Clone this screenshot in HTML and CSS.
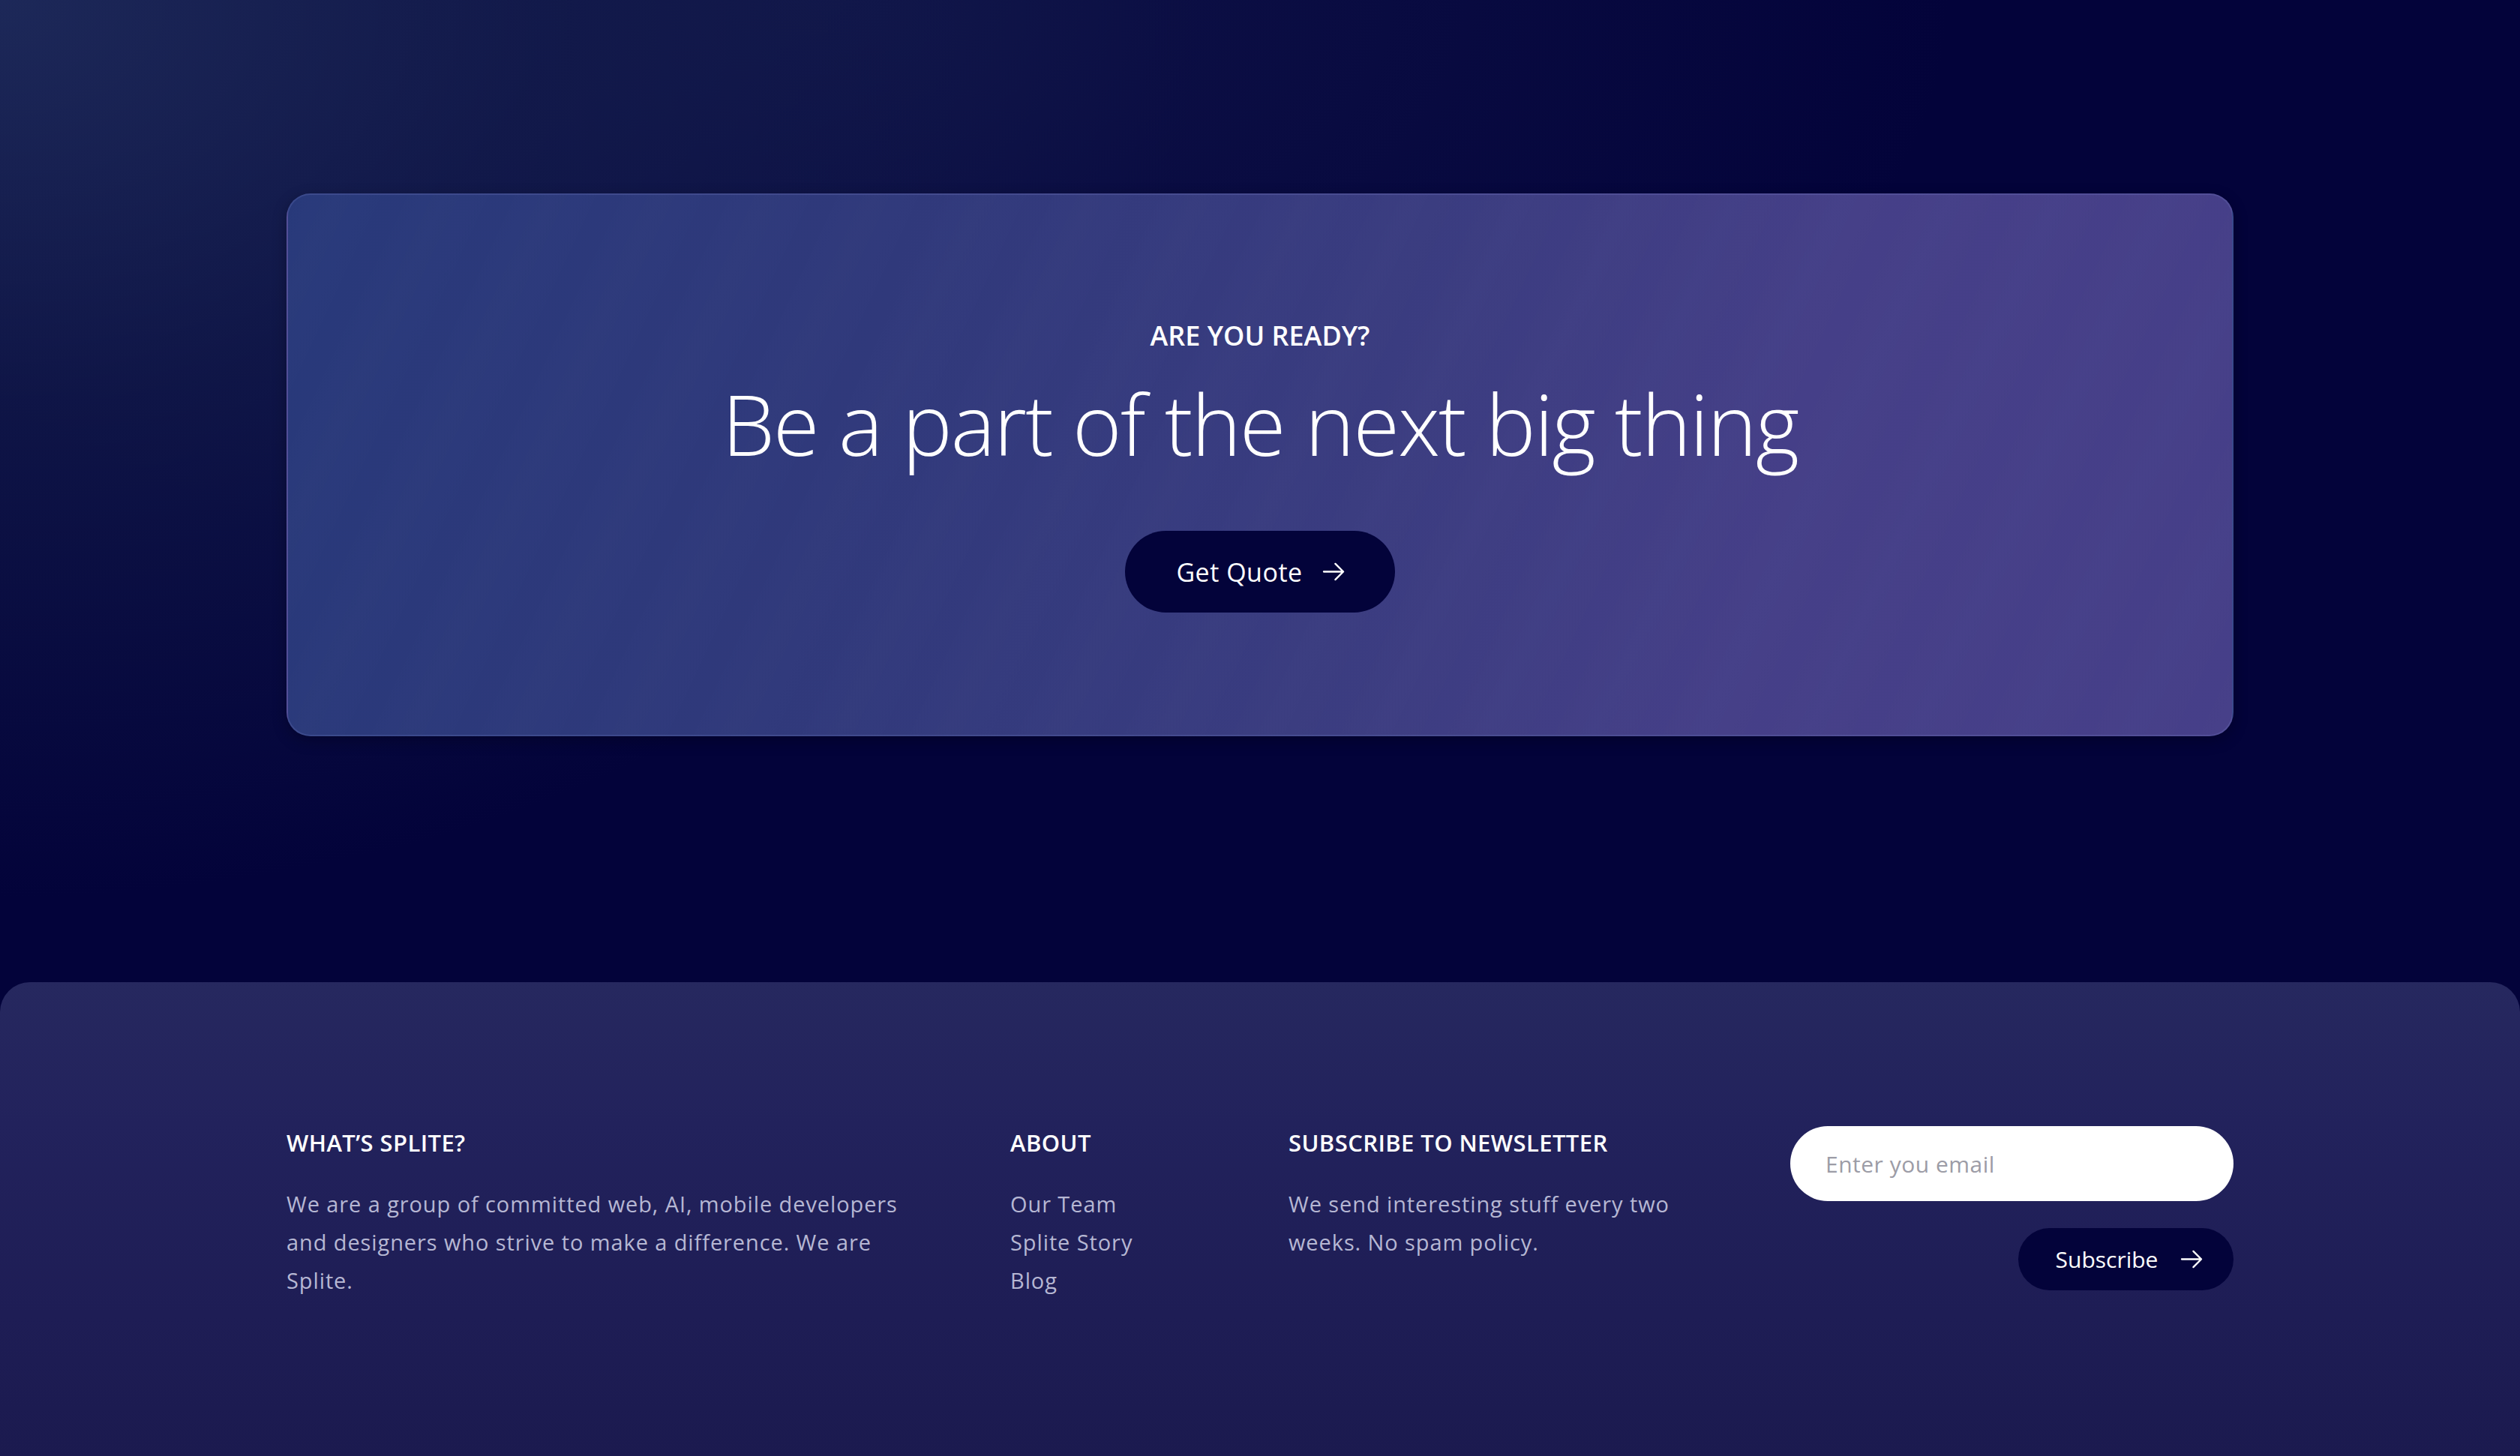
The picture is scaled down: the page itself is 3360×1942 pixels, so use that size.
FILE: index.html
```html
<!DOCTYPE html>
<html lang="en">
<head>
<meta charset="utf-8">
<title>Splite</title>
<link rel="stylesheet" href="styles.css">
</head>
<body>
<main class="page">
  <section class="cta-section">
    <div class="cta-card">
      <p class="cta-eyebrow">ARE YOU READY?</p>
      <h1 class="cta-title">Be a part of the next big thing</h1>
      <a class="btn btn-quote" href="#">
        <span>Get Quote</span>
        <svg class="arrow" viewBox="0 0 32 28" width="31" height="27" aria-hidden="true"><path d="M2 14H29M18 3L29 14L18 25" fill="none" stroke="#ffffff" stroke-width="2.4" stroke-linecap="round" stroke-linejoin="round"/></svg>
      </a>
    </div>
  </section>
  <footer class="footer">
    <div class="footer-grid">
      <div class="col">
        <h3 class="col-title">WHAT’S SPLITE?</h3>
        <p class="col-text">We are a group of committed web, AI, mobile developers<br>and designers who strive to make a difference. We are<br>Splite.</p>
      </div>
      <div class="col">
        <h3 class="col-title">ABOUT</h3>
        <ul class="links">
          <li><a href="#">Our Team</a></li>
          <li><a href="#">Splite Story</a></li>
          <li><a href="#">Blog</a></li>
        </ul>
      </div>
      <div class="col">
        <h3 class="col-title">SUBSCRIBE TO NEWSLETTER</h3>
        <p class="col-text">We send interesting stuff every two<br>weeks. No spam policy.</p>
      </div>
      <form class="subscribe">
        <input class="email" type="email" placeholder="Enter you email">
        <button class="btn btn-sub" type="button">
          <span>Subscribe</span>
          <svg class="arrow" viewBox="0 0 32 28" width="31" height="27" aria-hidden="true"><path d="M2 14H29M18 3L29 14L18 25" fill="none" stroke="#ffffff" stroke-width="2.4" stroke-linecap="round" stroke-linejoin="round"/></svg>
        </button>
      </form>
    </div>
  </footer>
</main>
</body>
</html>
```
FILE: styles.css
```css
* { box-sizing: border-box; }
html, body { margin: 0; padding: 0; }
body {
  font-family: "Open Sans", "Liberation Sans", sans-serif;
  background: #03033a;
  color: #ffffff;
  width: 3360px;
  height: 1942px;
  overflow: hidden;
}
.page {
  min-height: 1942px;
  display: flex;
  flex-direction: column;
  background:
    radial-gradient(ellipse 1600px 1200px at 0 0, rgba(30, 42, 90, 0.95) 0%, rgba(22, 32, 78, 0.6) 45%, rgba(3, 3, 58, 0) 100%),
    radial-gradient(ellipse 1500px 800px at 1100px 0, rgba(20, 26, 78, 0.7) 0%, rgba(3, 3, 58, 0) 100%),
    #03033a;
}
.cta-section {
  padding: 258px 0 328px;
}
.cta-card {
  width: 2596px;
  height: 724px;
  margin: 0 auto;
  border-radius: 32px;
  border: 2px solid rgba(140, 150, 220, 0.18);
  background:
    repeating-linear-gradient(115deg, rgba(255,255,255,0) 0px, rgba(255,255,255,0.006) 60px, rgba(255,255,255,0) 130px),
    linear-gradient(105deg, #28397a 0%, #30397b 30%, #3a3c80 55%, #453f88 75%, #463f89 100%);
  box-shadow: 0 6px 18px rgba(0, 0, 20, 0.35);
  display: flex;
  flex-direction: column;
  align-items: center;
  padding-top: 169px;
}
.cta-eyebrow {
  margin: 0;
  font-size: 36px;
  line-height: 37px;
  font-weight: 600;
  letter-spacing: 0px;
}
.cta-title {
  margin: 43px 0 0;
  font-size: 112px;
  line-height: 112px;
  font-weight: 300;
  letter-spacing: -1.8px;
}
.btn {
  display: inline-flex;
  align-items: center;
  justify-content: center;
  background: #03033a;
  color: #ffffff;
  text-decoration: none;
  border: none;
  border-radius: 60px;
  font-family: inherit;
}
.btn-quote {
  margin-top: 87px;
  width: 360px;
  height: 109px;
  font-size: 34px;
  letter-spacing: 0.5px;
  gap: 26px;
  padding-left: 2px;
}
.footer {
  flex: 1;
  border-radius: 40px 40px 0 0;
  background: linear-gradient(180deg, #26285f 0%, #22225c 30%, #1e1d55 70%, #1b1a4f 100%);
  padding-top: 199px;
}
.footer-grid {
  width: 2596px;
  margin: 0 auto;
  display: grid;
  grid-template-columns: 965px 371px 669px 591px;
  align-items: start;
}
.col-title {
  margin: 0;
  font-size: 31px;
  line-height: 31px;
  font-weight: 600;
  letter-spacing: 0.4px;
  color: #ffffff;
}
.col-text {
  margin: 40px 0 0;
  font-size: 29px;
  line-height: 51px;
  font-weight: 400;
  letter-spacing: 0.9px;
  color: #b6b7d3;
}
.links {
  list-style: none;
  margin: 40px 0 0;
  padding: 0;
}
.links li {
  font-size: 29px;
  line-height: 51px;
  letter-spacing: 0.9px;
}
.links a {
  color: #b6b7d3;
  text-decoration: none;
}
.subscribe {
  margin: -7px 0 0;
  display: flex;
  flex-direction: column;
  align-items: flex-end;
}
.email {
  width: 591px;
  height: 100px;
  border: none;
  border-radius: 50px;
  background: #ffffff;
  padding: 0 0 0 47px;
  font-family: inherit;
  font-size: 30px;
  letter-spacing: 0.5px;
  outline: none;
}
.email::placeholder { color: #9c9ca6; }
.btn-sub {
  margin-top: 36px;
  width: 287px;
  height: 83px;
  font-size: 30px;
  gap: 30px;
  padding-left: 16px;
  cursor: pointer;
}
```
